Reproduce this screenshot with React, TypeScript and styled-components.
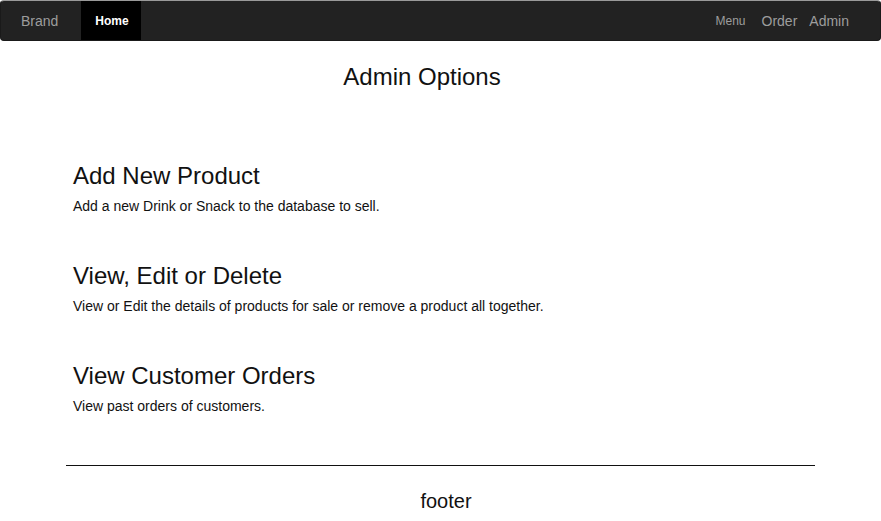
import React from "react";
import styled, { createGlobalStyle } from "styled-components";

const Global = createGlobalStyle`
  html, body { margin: 0; padding: 0; background: #fff; }
  body { font-family: "Liberation Sans", Arial, Helvetica, sans-serif; color: #111; }
  #root { width: 881px; }
`;

const Navbar = styled.nav`
  box-sizing: border-box;
  height: 41px;
  width: 881px;
  background: #222;
  border: 1px solid #1a1a1a;
  border-top-color: #9a9a9a;
  border-radius: 4px;
  display: flex;
  align-items: stretch;
`;

const Brand = styled.a`
  display: flex;
  align-items: center;
  padding: 0 23px 0 20px;
  font-size: 14px;
  color: #9d9d9d;
  text-decoration: none;
`;

const HomeLink = styled.a`
  display: flex;
  align-items: center;
  padding: 0 12px 0 14px;
  background: #000;
  color: #fff;
  font-weight: bold;
  font-size: 12px;
  text-decoration: none;
`;

const RightNav = styled.div`
  margin-left: auto;
  display: flex;
  align-items: center;
  gap: 12px;
  padding-right: 31px;
`;

const NavItem = styled.a<{ $small?: boolean }>`
  font-size: ${(p) => (p.$small ? "12px" : "14px")};
  margin-right: ${(p) => (p.$small ? "4px" : "0")};
  color: #9d9d9d;
  text-decoration: none;
`;

const Title = styled.h1`
  margin: 22px 37px 0 0;
  font-size: 24px;
  font-weight: normal;
  text-align: center;
  line-height: 28px;
`;

const Sections = styled.div`
  padding: 71px 0 0 73px;
  display: flex;
  flex-direction: column;
  gap: 47px;
`;

const Section = styled.section`
  display: flex;
  flex-direction: column;
`;

const SectionTitle = styled.h2`
  margin: 0;
  font-size: 24px;
  font-weight: normal;
  line-height: 28px;
`;

const SectionText = styled.p`
  margin: 7px 0 0;
  font-size: 14px;
  line-height: 18px;
`;

const Footer = styled.footer`
  margin: 50px 66px 0;
  border-top: 1px solid #111;
  text-align: center;
  padding: 23px 0 0 11px;
  font-size: 20px;
  line-height: 24px;
`;

const items = [
  {
    title: "Add New Product",
    text: "Add a new Drink or Snack to the database to sell.",
  },
  {
    title: "View, Edit or Delete",
    text: "View or Edit the details of products for sale or remove a product all together.",
  },
  {
    title: "View Customer Orders",
    text: "View past orders of customers.",
  },
];

export default function App() {
  return (
    <>
      <Global />
      <Navbar>
        <Brand href="#">Brand</Brand>
        <HomeLink href="#">Home</HomeLink>
        <RightNav>
          <NavItem $small href="#">Menu</NavItem>
          <NavItem href="#">Order</NavItem>
          <NavItem href="#">Admin</NavItem>
        </RightNav>
      </Navbar>
      <Title>Admin Options</Title>
      <Sections>
        {items.map((it) => (
          <Section key={it.title}>
            <SectionTitle>{it.title}</SectionTitle>
            <SectionText>{it.text}</SectionText>
          </Section>
        ))}
      </Sections>
      <Footer>footer</Footer>
    </>
  );
}
